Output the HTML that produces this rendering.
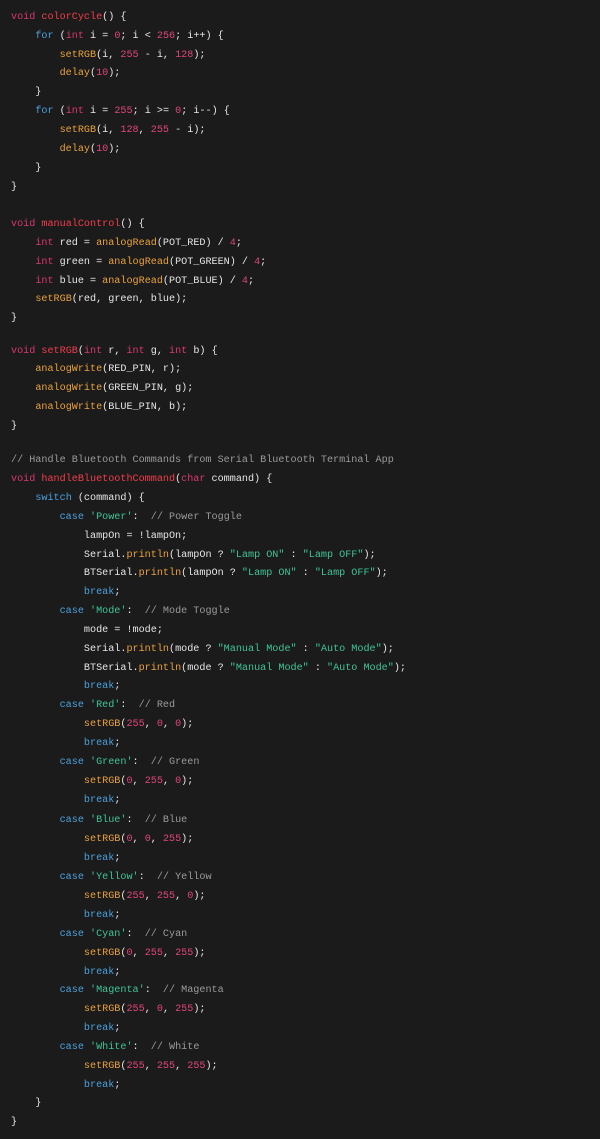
<!DOCTYPE html>
<html><head><meta charset="utf-8"><style>
body{margin:0;background:#1b1b1b;width:600px;height:1139px;overflow:hidden;position:relative}
.l{position:absolute;left:11px;font-family:"Liberation Mono",monospace;font-size:10.15px;color:#e6e6e6;white-space:pre;line-height:12px;margin-top:-4px}
.k{color:#d8396b}.f{color:#f23d4c}.b{color:#4aa0dc}.n{color:#e0457b}.o{color:#e9a23b}.s{color:#3fc494}.c{color:#9a9a9a}.t{color:#d8396b}
</style></head><body>
<div class="l" style="top:16px"><span class="k">void</span> <span class="f">colorCycle</span>() {</div>
<div class="l" style="top:35px">    <span class="b">for</span> (<span class="t">int</span> i = <span class="n">0</span>; i &lt; <span class="n">256</span>; i++) {</div>
<div class="l" style="top:54px">        <span class="o">setRGB</span>(i, <span class="n">255</span> - i, <span class="n">128</span>);</div>
<div class="l" style="top:72px">        <span class="o">delay</span>(<span class="n">10</span>);</div>
<div class="l" style="top:91px">    }</div>
<div class="l" style="top:110px">    <span class="b">for</span> (<span class="t">int</span> i = <span class="n">255</span>; i &gt;= <span class="n">0</span>; i--) {</div>
<div class="l" style="top:129px">        <span class="o">setRGB</span>(i, <span class="n">128</span>, <span class="n">255</span> - i);</div>
<div class="l" style="top:148px">        <span class="o">delay</span>(<span class="n">10</span>);</div>
<div class="l" style="top:167px">    }</div>
<div class="l" style="top:186px">}</div>
<div class="l" style="top:223px"><span class="k">void</span> <span class="f">manualControl</span>() {</div>
<div class="l" style="top:242px">    <span class="t">int</span> red = <span class="o">analogRead</span>(POT_RED) / <span class="n">4</span>;</div>
<div class="l" style="top:261px">    <span class="t">int</span> green = <span class="o">analogRead</span>(POT_GREEN) / <span class="n">4</span>;</div>
<div class="l" style="top:280px">    <span class="t">int</span> blue = <span class="o">analogRead</span>(POT_BLUE) / <span class="n">4</span>;</div>
<div class="l" style="top:298px">    <span class="o">setRGB</span>(red, green, blue);</div>
<div class="l" style="top:317px">}</div>
<div class="l" style="top:350px"><span class="k">void</span> <span class="f">setRGB</span>(<span class="t">int</span> r, <span class="t">int</span> g, <span class="t">int</span> b) {</div>
<div class="l" style="top:368px">    <span class="o">analogWrite</span>(RED_PIN, r);</div>
<div class="l" style="top:387px">    <span class="o">analogWrite</span>(GREEN_PIN, g);</div>
<div class="l" style="top:406px">    <span class="o">analogWrite</span>(BLUE_PIN, b);</div>
<div class="l" style="top:425px">}</div>
<div class="l" style="top:459px"><span class="c">// Handle Bluetooth Commands from Serial Bluetooth Terminal App</span></div>
<div class="l" style="top:478px"><span class="k">void</span> <span class="f">handleBluetoothCommand</span>(<span class="t">char</span> command) {</div>
<div class="l" style="top:497px">    <span class="b">switch</span> (command) {</div>
<div class="l" style="top:516px">        <span class="b">case</span> <span class="s">'Power'</span>:  <span class="c">// Power Toggle</span></div>
<div class="l" style="top:535px">            lampOn = !lampOn;</div>
<div class="l" style="top:554px">            Serial.<span class="o">println</span>(lampOn ? <span class="s">"Lamp ON"</span> : <span class="s">"Lamp OFF"</span>);</div>
<div class="l" style="top:572px">            BTSerial.<span class="o">println</span>(lampOn ? <span class="s">"Lamp ON"</span> : <span class="s">"Lamp OFF"</span>);</div>
<div class="l" style="top:591px">            <span class="b">break</span>;</div>
<div class="l" style="top:610px">        <span class="b">case</span> <span class="s">'Mode'</span>:  <span class="c">// Mode Toggle</span></div>
<div class="l" style="top:629px">            mode = !mode;</div>
<div class="l" style="top:648px">            Serial.<span class="o">println</span>(mode ? <span class="s">"Manual Mode"</span> : <span class="s">"Auto Mode"</span>);</div>
<div class="l" style="top:667px">            BTSerial.<span class="o">println</span>(mode ? <span class="s">"Manual Mode"</span> : <span class="s">"Auto Mode"</span>);</div>
<div class="l" style="top:685px">            <span class="b">break</span>;</div>
<div class="l" style="top:704px">        <span class="b">case</span> <span class="s">'Red'</span>:  <span class="c">// Red</span></div>
<div class="l" style="top:723px">            <span class="o">setRGB</span>(<span class="n">255</span>, <span class="n">0</span>, <span class="n">0</span>);</div>
<div class="l" style="top:742px">            <span class="b">break</span>;</div>
<div class="l" style="top:761px">        <span class="b">case</span> <span class="s">'Green'</span>:  <span class="c">// Green</span></div>
<div class="l" style="top:780px">            <span class="o">setRGB</span>(<span class="n">0</span>, <span class="n">255</span>, <span class="n">0</span>);</div>
<div class="l" style="top:799px">            <span class="b">break</span>;</div>
<div class="l" style="top:819px">        <span class="b">case</span> <span class="s">'Blue'</span>:  <span class="c">// Blue</span></div>
<div class="l" style="top:838px">            <span class="o">setRGB</span>(<span class="n">0</span>, <span class="n">0</span>, <span class="n">255</span>);</div>
<div class="l" style="top:857px">            <span class="b">break</span>;</div>
<div class="l" style="top:876px">        <span class="b">case</span> <span class="s">'Yellow'</span>:  <span class="c">// Yellow</span></div>
<div class="l" style="top:895px">            <span class="o">setRGB</span>(<span class="n">255</span>, <span class="n">255</span>, <span class="n">0</span>);</div>
<div class="l" style="top:914px">            <span class="b">break</span>;</div>
<div class="l" style="top:933px">        <span class="b">case</span> <span class="s">'Cyan'</span>:  <span class="c">// Cyan</span></div>
<div class="l" style="top:952px">            <span class="o">setRGB</span>(<span class="n">0</span>, <span class="n">255</span>, <span class="n">255</span>);</div>
<div class="l" style="top:971px">            <span class="b">break</span>;</div>
<div class="l" style="top:989px">        <span class="b">case</span> <span class="s">'Magenta'</span>:  <span class="c">// Magenta</span></div>
<div class="l" style="top:1008px">            <span class="o">setRGB</span>(<span class="n">255</span>, <span class="n">0</span>, <span class="n">255</span>);</div>
<div class="l" style="top:1027px">            <span class="b">break</span>;</div>
<div class="l" style="top:1046px">        <span class="b">case</span> <span class="s">'White'</span>:  <span class="c">// White</span></div>
<div class="l" style="top:1065px">            <span class="o">setRGB</span>(<span class="n">255</span>, <span class="n">255</span>, <span class="n">255</span>);</div>
<div class="l" style="top:1084px">            <span class="b">break</span>;</div>
<div class="l" style="top:1102px">    }</div>
<div class="l" style="top:1121px">}</div>
</body></html>
